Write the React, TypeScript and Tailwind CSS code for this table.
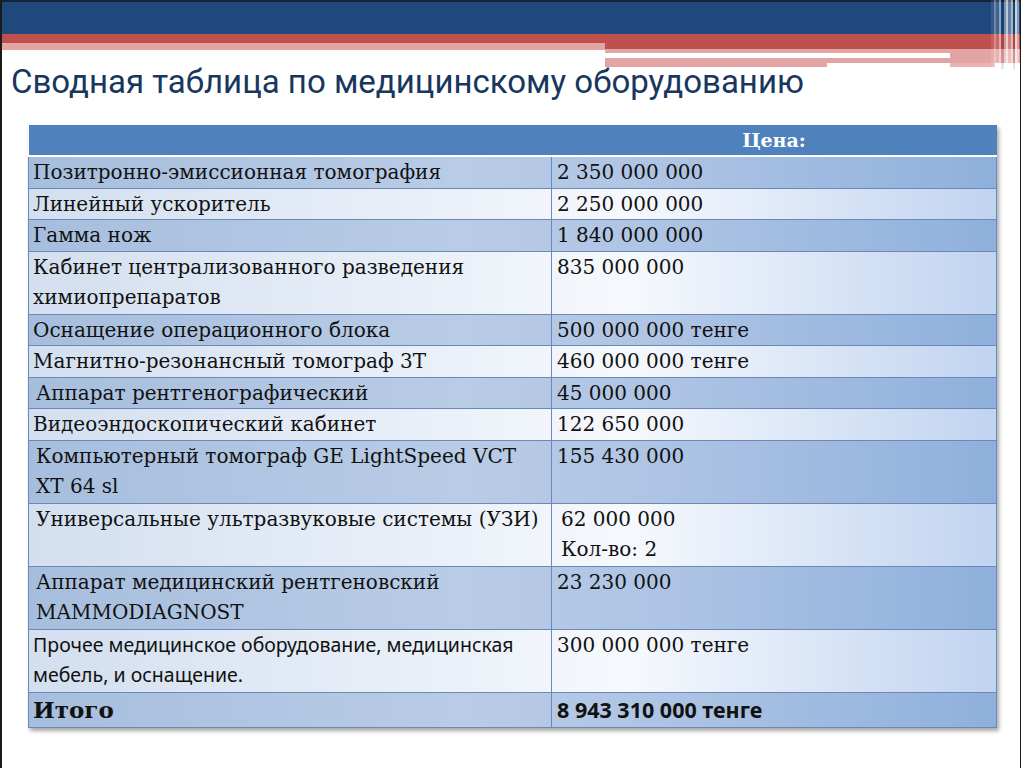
import React from 'react';

type Row = {
    name: React.ReactNode;
    price: React.ReactNode;
    dark: boolean;
    tall?: boolean;
    indent?: boolean;
    priceIndent?: boolean;
    sans?: boolean;
};

const rows: Row[] = [
    { name: 'Позитронно-эмиссионная томография', price: '2 350 000 000', dark: true },
    { name: 'Линейный ускоритель', price: '2 250 000 000', dark: false },
    { name: 'Гамма нож', price: '1 840 000 000', dark: true },
    {
        name: (
            <>
                Кабинет централизованного разведения
                <br />
                химиопрепаратов
            </>
        ),
        price: '835 000 000',
        dark: false,
        tall: true,
    },
    { name: 'Оснащение операционного блока', price: '500 000 000 тенге', dark: true },
    { name: 'Магнитно-резонансный томограф 3T', price: '460 000 000 тенге', dark: false },
    { name: 'Аппарат рентгенографический', price: '45 000 000', dark: true, indent: true },
    { name: 'Видеоэндоскопический кабинет', price: '122 650 000', dark: false },
    {
        name: (
            <>
                Компьютерный томограф GE LightSpeed VCT
                <br />
                XT 64 sl
            </>
        ),
        price: '155 430 000',
        dark: true,
        tall: true,
        indent: true,
    },
    {
        name: 'Универсальные ультразвуковые системы (УЗИ)',
        price: (
            <>
                62 000 000
                <br />
                Кол-во: 2
            </>
        ),
        dark: false,
        tall: true,
        indent: true,
        priceIndent: true,
    },
    {
        name: (
            <>
                Аппарат медицинский рентгеновский
                <br />
                MAMMODIAGNOST
            </>
        ),
        price: '23 230 000',
        dark: true,
        tall: true,
        indent: true,
    },
    {
        name: (
            <>
                Прочее медицинское оборудование, медицинская
                <br />
                мебель, и оснащение.
            </>
        ),
        price: '300 000 000 тенге',
        dark: false,
        tall: true,
        sans: true,
    },
];

const darkBg = 'bg-[linear-gradient(90deg,#a6bedd_0%,#b9cce6_45%,#aec4e4_65%,#8fb0dc_100%)]';
const lightBg = 'bg-[linear-gradient(90deg,#d3dfef_0%,#e9eff8_40%,#f6f9fd_62%,#c0d3f0_100%)]';

function HeaderBands() {
    return (
        <div className="relative">
            <div className="h-[2px] bg-[#16213a]" />
            <div className="h-[32px] bg-[#1f497d]" />
            <div className="flex">
                <div className="w-[603px]">
                    <div className="h-[9px] bg-[#c0504d]" />
                    <div className="h-[7px] bg-[#e3a5a3]" />
                </div>
                <div className="flex-1">
                    <div className="h-[15px] bg-[#c0504d]" />
                    <div className="h-[4px] bg-[#e3a5a3]" />
                    <div className="flex h-[5px]">
                        <div className="w-[345px] bg-white" />
                        <div className="flex-1 bg-[#e3a5a3]" />
                    </div>
                    <div className="h-[5px] bg-[#e3a5a3]" />
                    <div className="flex h-[4px]">
                        <div className="w-[222px] bg-[#e3a5a3]" />
                        <div className="w-[123px] bg-white" />
                        <div className="w-[45px] bg-[#e8b3b1]" />
                    </div>
                </div>
            </div>
            {/* vertical stripes, top right corner */}
            <div className="absolute right-[1px] top-0 flex h-[69px] w-[28px]">
                <div className="w-[3px] bg-white/10" />
                <div className="w-[2px] bg-white/35" />
                <div className="w-[3px] bg-white/15" />
                <div className="w-[2px] bg-white/50" />
                <div className="w-[3px] bg-black/10" />
                <div className="w-[2px] bg-white/40" />
                <div className="w-[2px] bg-white/70" />
                <div className="w-[3px] bg-white/30" />
                <div className="w-[2px] bg-white/60" />
                <div className="w-[2px] bg-black/10" />
                <div className="w-[2px] bg-white/75" />
                <div className="w-[2px] bg-white/45" />
            </div>
        </div>
    );
}

export default function App() {
    const serif = "font-['DejaVu_Serif','Liberation_Serif',serif]";
    return (
        <div className="h-[768px] w-[1024px] overflow-hidden bg-white">
            <div className="h-[768px] w-[1021px] border-l-2 border-r border-[#1b1b1b]">
                <HeaderBands />

                <h1 className="ml-[9px] mt-[-5px] h-[63px] font-['Roboto',sans-serif] text-[33px] leading-[40px] text-[#17375e]">
                    Сводная таблица по медицинскому оборудованию
                </h1>

                <table className={`ml-[26px] w-[969px] border-collapse text-[20px] text-[#111] shadow-[2px_3px_4px_rgba(0,0,0,0.35)] ${serif}`}>
                    <thead>
                        <tr className="h-[31px] bg-[#4f81bd]">
                            <th className="w-[523px] border-b-2 border-white p-0" />
                            <th className="border-b-2 border-white p-0 text-center text-[19px] font-bold text-white">
                                Цена:
                            </th>
                        </tr>
                    </thead>
                    <tbody>
                        {rows.map((row, i) => (
                            <tr key={i} className={row.dark ? darkBg : lightBg}>
                                <td
                                    className={`border border-[#6a89b8] py-0 align-top leading-[30.5px] ${row.indent ? 'pl-[7px]' : 'pl-[4px]'} ${row.sans ? "font-['Noto_Sans',sans-serif] text-[19.5px]" : ''} ${row.tall ? 'h-[63px]' : 'h-[31.5px] whitespace-nowrap'}`}
                                >
                                    {row.name}
                                </td>
                                <td
                                    className={`border border-[#6a89b8] py-0 align-top leading-[30.5px] ${row.priceIndent ? 'pl-[9px]' : 'pl-[5px]'}`}
                                >
                                    {row.price}
                                </td>
                            </tr>
                        ))}
                        <tr className={darkBg}>
                            <td className="h-[35px] border border-[#6a89b8] py-0 pl-[4px] align-middle text-[23px] font-bold">
                                Итого
                            </td>
                            <td className="border border-[#6a89b8] py-0 pl-[5px] align-middle font-['Noto_Sans',sans-serif] text-[21.5px] font-bold">
                                8 943 310 000 тенге
                            </td>
                        </tr>
                    </tbody>
                </table>
            </div>
        </div>
    );
}
